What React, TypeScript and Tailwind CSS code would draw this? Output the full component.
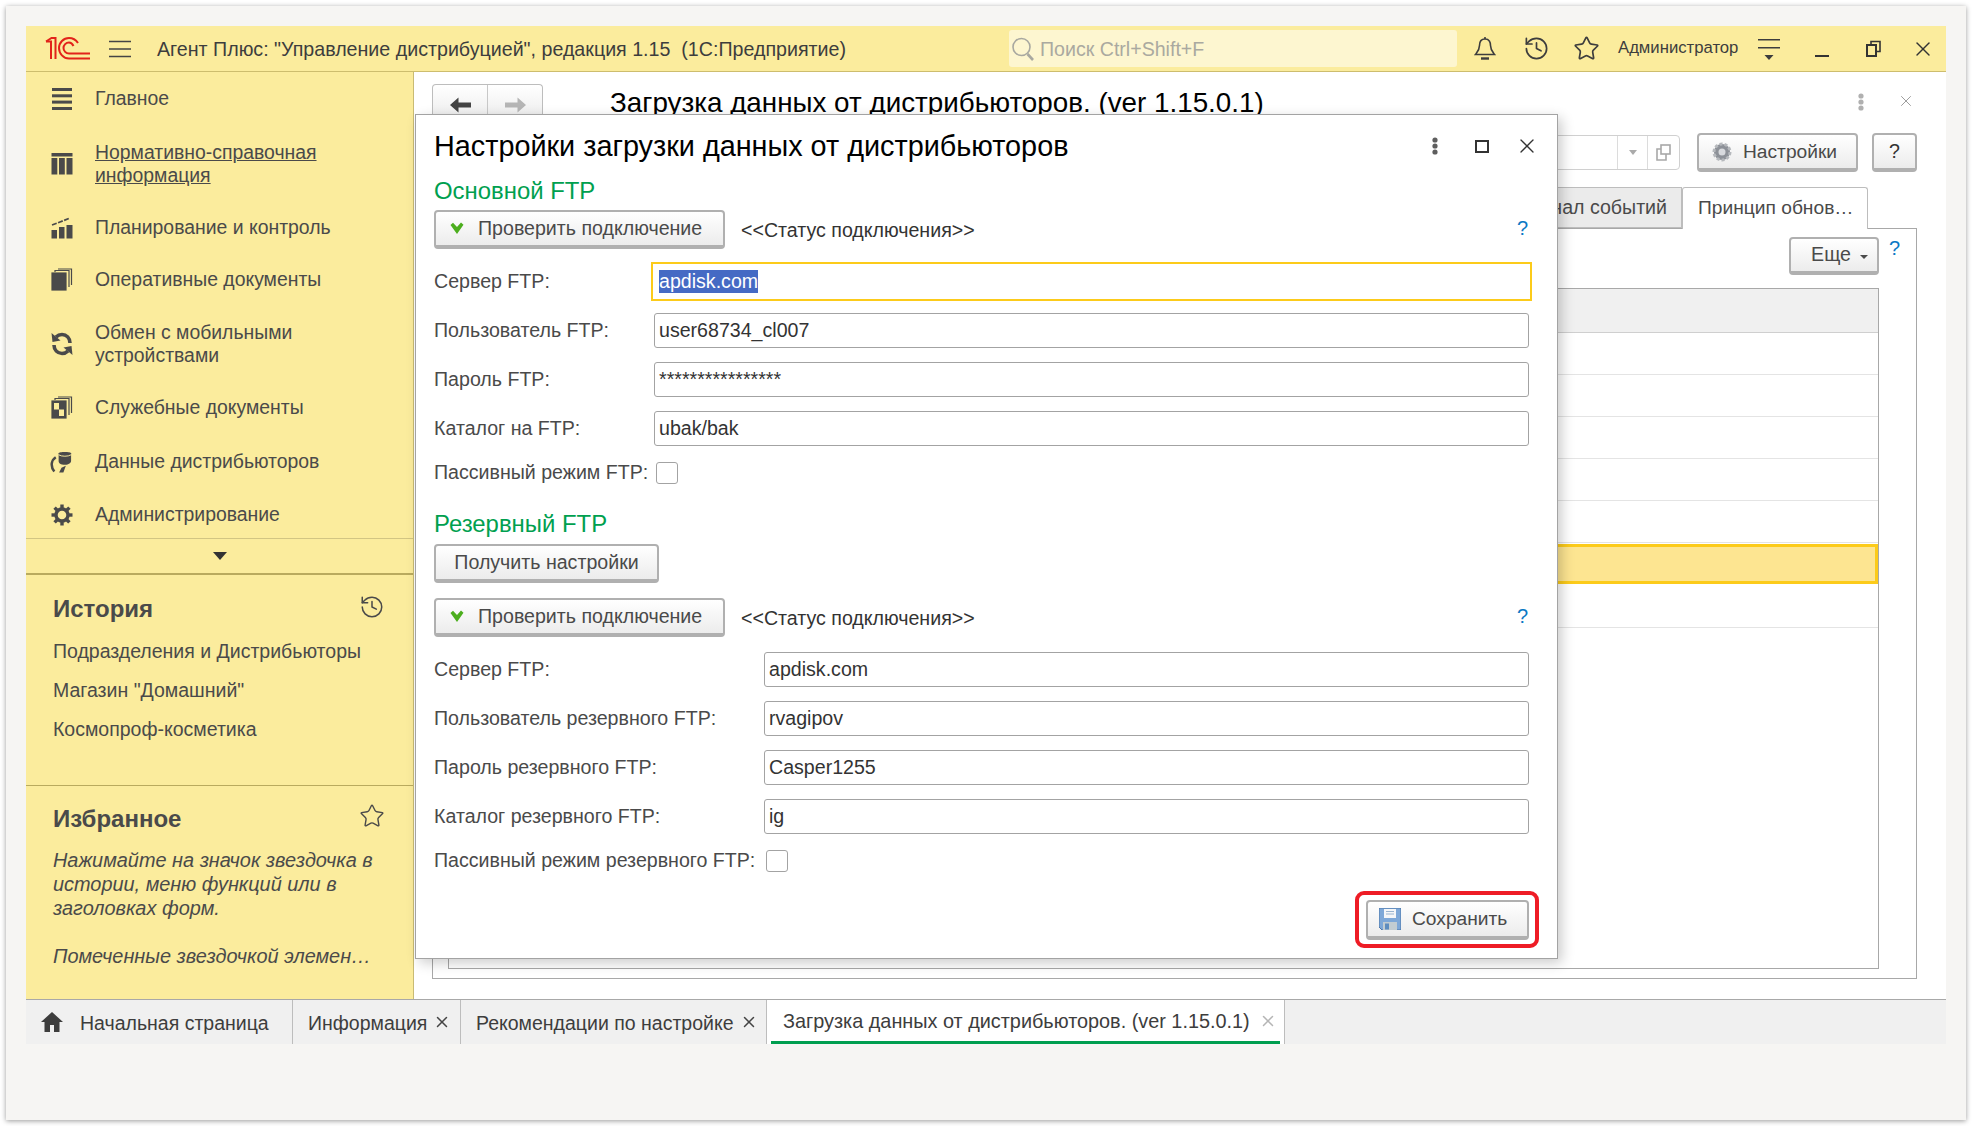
import React from "react";
import { History, Star, X } from "lucide-react";

// icons drawn to follow the 1C taxi interface
const Logo = () => (
  <svg width="45" height="23" viewBox="0 0 45 23" fill="none" stroke="#e2231a" strokeWidth="2">
    <path d="M1 4.5 H6 V22" />
    <path d="M1 4.5 L6.5 1 H10.5 V22" />
    <path d="M33 6 C31 3 27.5 1 24 1 C18.5 1 14 5.5 14 11 C14 16.5 18.5 21.5 24 21.5 H45" />
    <path d="M28.5 9 C27.5 7 26 5.5 24 5.5 C21 5.5 18.5 8 18.5 11 C18.5 14 21 16.5 24 16.5 H45" />
  </svg>
);

const Hamburger = () => (
  <svg width="22" height="18" viewBox="0 0 22 18" stroke="#444" strokeWidth="1.5">
    <path d="M0 1.5 H22 M0 9 H22 M0 16.5 H22" />
  </svg>
);

const Search = () => (
  <svg width="24" height="26" viewBox="0 0 24 26" fill="none" stroke="#a8a8a0" strokeWidth="1.6">
    <circle cx="10.5" cy="11" r="8.5" />
    <path d="M16.5 18 L22 24" strokeWidth="2.6" />
  </svg>
);

const Bell = () => (
  <svg width="22" height="25" viewBox="0 0 22 25" fill="none" stroke="#3d3d3d" strokeWidth="1.6">
    <path d="M11 3 C6.5 3 5.5 6.5 5.5 9.5 C5.5 14 3.5 16 1.5 18.5 H20.5 C18.5 16 16.5 14 16.5 9.5 C16.5 6.5 15.5 3 11 3 Z" />
    <path d="M11 1 V3" />
    <path d="M7 22.5 H15" strokeWidth="2.4" />
  </svg>
);

const FilterMenu = () => (
  <svg width="22" height="25" viewBox="0 0 22 25" fill="#3d3d3d">
    <rect x="0" y="3" width="22" height="1.5" />
    <rect x="0" y="11" width="22" height="1.5" />
    <path d="M6.5 19 H15.5 L11 24 Z" />
  </svg>
);

const Restore = () => (
  <svg width="15" height="17" viewBox="0 0 15 17" fill="none" stroke="#333" strokeWidth="2">
    <rect x="1" y="5" width="9" height="11" />
    <path d="M5 5 V1.5 H14 V11.5 H10" strokeWidth="1.6" />
  </svg>
);

const IconMain = () => (
  <svg width="22" height="22" viewBox="0 0 22 22" fill="#4a4a4a">
    <rect x="1" y="0" width="20" height="3" />
    <rect x="1" y="6.3" width="20" height="3" />
    <rect x="1" y="12.6" width="20" height="3" />
    <rect x="1" y="19" width="20" height="3" />
  </svg>
);

const IconTable = () => (
  <svg width="22" height="22" viewBox="0 0 22 22" fill="#4a4a4a">
    <rect x="0.5" y="0" width="21" height="3.5" />
    <rect x="0.5" y="5" width="5.8" height="16.5" />
    <rect x="8" y="5" width="5.8" height="16.5" />
    <rect x="15.5" y="5" width="6" height="16.5" />
  </svg>
);

const IconChart = () => (
  <svg width="22" height="22" viewBox="0 0 22 22" fill="#4a4a4a">
    <rect x="0.5" y="13" width="5.5" height="8.5" />
    <rect x="8" y="10" width="5.5" height="11.5" />
    <rect x="15.5" y="8" width="6" height="13.5" />
    <path d="M1 8 L9 5 L19 1" fill="none" stroke="#4a4a4a" strokeWidth="1.8" strokeDasharray="5 1.5" />
  </svg>
);

const IconDocs = () => (
  <svg width="22" height="23" viewBox="0 0 22 23" fill="none" stroke="#4a4a4a" strokeWidth="1.2">
    <rect x="1" y="5" width="14" height="17" fill="#4a4a4a" />
    <path d="M4 4 V2.5 H18 V19" />
    <path d="M7 1 H20.5 V17" />
  </svg>
);

const IconSync = () => (
  <svg width="22" height="24" viewBox="0 0 22 24" fill="none" stroke="#4a4a4a" strokeWidth="3.6">
    <path d="M19 11 C19 6 15.5 2.5 11 2.5 C8.5 2.5 6.5 3.5 5 5" />
    <path d="M0.5 1 L1.5 10 L9.5 8.5 Z" fill="#4a4a4a" stroke="none" />
    <path d="M3 13 C3 18 6.5 21.5 11 21.5 C13.5 21.5 15.5 20.5 17 19" />
    <path d="M21.5 23 L20.5 14 L12.5 15.5 Z" fill="#4a4a4a" stroke="none" />
  </svg>
);

const IconService = () => (
  <svg width="22" height="23" viewBox="0 0 22 23" fill="none" stroke="#4a4a4a" strokeWidth="1.2">
    <rect x="1" y="5" width="14" height="17" fill="#4a4a4a" />
    <rect x="3" y="7" width="5" height="6.5" fill="#fbec9d" stroke="none" />
    <rect x="8" y="13.5" width="5" height="6.5" fill="#fbec9d" stroke="none" />
    <path d="M4 4 V2.5 H18 V19" />
    <path d="M7 1 H20.5 V17" />
  </svg>
);

const IconData = () => (
  <svg width="24" height="23" viewBox="0 0 24 23" fill="#4a4a4a">
    <path d="M9 3 C9 1 22 1 22 3 V11 C22 14 17 15 15.5 15 C11 15 9 13.5 9 11 Z" />
    <path d="M9 4.5 C12 6.5 19 6.5 22 4.5" stroke="#fbec9d" strokeWidth="1" fill="none" />
    <path d="M6 7 C1.5 10 0 16 4.5 22" fill="none" stroke="#4a4a4a" strokeWidth="2.6" />
    <path d="M16.5 16 L14 23 H9.5 L12 18 Z" />
  </svg>
);

const IconGear = () => (
  <svg width="22" height="22" viewBox="0 0 22 22" fill="none" stroke="#4a4a4a">
    <circle cx="11" cy="11" r="6" strokeWidth="3.4" />
    <g strokeWidth="3.4">
      <path d="M11 0.5 V4" />
      <path d="M11 18 V21.5" />
      <path d="M0.5 11 H4" />
      <path d="M18 11 H21.5" />
      <path d="M3.6 3.6 L6 6" />
      <path d="M16 16 L18.4 18.4" />
      <path d="M3.6 18.4 L6 16" />
      <path d="M16 6 L18.4 3.6" />
    </g>
  </svg>
);

const Kebab = ({ color }: { color: string }) => (
  <svg width="6" height="18" viewBox="0 0 6 18" fill={color}>
    <circle cx="3" cy="3" r="2.6" />
    <circle cx="3" cy="9" r="2.6" />
    <circle cx="3" cy="15" r="2.6" />
  </svg>
);

const Check = () => (
  <svg width="14" height="13" viewBox="0 0 14 13" fill="#4cae1e">
    <path d="M0.5 3 L3 0.8 L7 5 L11 0.5 L13.5 2.8 L7 12 Z" />
  </svg>
);

const Floppy = () => (
  <svg width="22" height="22" viewBox="0 0 22 22">
    <path d="M0 0 H22 V22 H3 L0 19 Z" fill="#7ea8d8" stroke="#4d76a8" strokeWidth="1" />
    <rect x="5" y="1" width="12" height="9" fill="#f4f6f8" />
    <path d="M7 3.5 H15 M7 6 H15" stroke="#9ab4d0" strokeWidth="1" />
    <rect x="4" y="14" width="14" height="8" fill="#c3cdd2" />
    <rect x="6" y="15.5" width="4" height="6" fill="#5e8dbf" />
  </svg>
);

const Gear3d = () => (
  <svg width="20" height="22" viewBox="0 0 20 22">
    <circle cx="10" cy="11" r="8" fill="#8d9198" stroke="#b6b9bd" strokeWidth="3" strokeDasharray="3 2" />
    <circle cx="10" cy="11" r="3.5" fill="#d8dade" />
  </svg>
);

const Home = () => (
  <svg width="22" height="20" viewBox="0 0 22 20" fill="#3d3d3d">
    <path d="M11 0 L22 10 H18.5 V20 H13 V13 H9 V20 H3.5 V10 H0 Z" />
  </svg>
);

const ArrowLeft = ({ color }: { color: string }) => (
  <svg width="21" height="16" viewBox="0 0 21 16" fill={color}>
    <path d="M0 8 L8.5 0.5 V5.5 H21 V10.5 H8.5 V15.5 Z" />
  </svg>
);

const ArrowRight = ({ color }: { color: string }) => (
  <svg width="21" height="16" viewBox="0 0 21 16" fill={color}>
    <path d="M21 8 L12.5 0.5 V5.5 H0 V10.5 H12.5 V15.5 Z" />
  </svg>
);

const sections = [
  { icon: <IconMain />, title: ["Главное"], margin: "" },
  { icon: <IconTable />, title: ["Нормативно-справочная", "информация"], margin: "mt-[31px]", underline: true },
  { icon: <IconChart />, title: ["Планирование и контроль"], margin: "mt-[29px]" },
  { icon: <IconDocs />, title: ["Оперативные документы"], margin: "mt-[29px]" },
  { icon: <IconSync />, title: ["Обмен с мобильными", "устройствами"], margin: "mt-[30px]" },
  { icon: <IconService />, title: ["Служебные документы"], margin: "mt-[29px]" },
  { icon: <IconData />, title: ["Данные дистрибьюторов"], margin: "mt-[31px]" },
  { icon: <IconGear />, title: ["Администрирование"], margin: "mt-[30px]" },
];

const Sidebar = () => (
  <aside className="flex w-[388px] shrink-0 flex-col border-r border-[#c9bb74] bg-[#fbec9d] text-[19.4px] leading-[23px] text-[#4a4a4a]">
    <nav className="flex h-[466px] flex-col pl-[24px] pt-[15px]">
      {sections.map((s) => (
        <div key={s.title[0]} className={`flex items-center gap-[22px] ${s.margin}`}>
          <span className="flex w-[23px] shrink-0 justify-center">{s.icon}</span>
          <div className={s.underline ? "underline" : ""}>
            {s.title.map((line) => (
              <div key={line}>{line}</div>
            ))}
          </div>
        </div>
      ))}
    </nav>
    <div className="flex h-[37px] items-center justify-center border-t border-[#d2c583] pl-[1px] border-b-2 border-b-[#b9aa5e]">
      <div className="h-0 w-0 border-x-[7px] border-t-[8px] border-x-transparent border-t-[#333]" />
    </div>
    <section className="h-[211px] border-b border-[#b9aa5e] pl-[27px] pr-[28px] pt-[19px]">
      <div className="flex h-[28px] items-center justify-between">
        <h2 className="text-[24px] font-bold text-[#4a4a4a]">История</h2>
        <History size={26} strokeWidth={1.4} color="#4a4a4a" className="-mt-[2px]" />
      </div>
      <div className="mt-[18px] flex flex-col gap-[16px] text-[19.5px]">
        <div>Подразделения и Дистрибьюторы</div>
        <div>Магазин "Домашний"</div>
        <div>Космопроф-косметика</div>
      </div>
    </section>
    <section className="pl-[27px] pr-[28px] pt-[18px]">
      <div className="flex h-[28px] items-center justify-between">
        <h2 className="text-[24px] font-bold text-[#4a4a4a]">Избранное</h2>
        <Star size={26} strokeWidth={1.3} color="#4a4a4a" className="-mt-[4px]" />
      </div>
      <div className="mt-[16px] text-[19.9px] leading-[24px] italic">
        <p>Нажимайте на значок звездочка в</p>
        <p>истории, меню функций или в</p>
        <p>заголовках форм.</p>
        <p className="mt-[24px] whitespace-nowrap">Помеченные звездочкой элемен…</p>
      </div>
    </section>
  </aside>
);

const Button = ({ children, className = "" }: { children: React.ReactNode; className?: string }) => (
  <button className={`flex shrink-0 items-center rounded-[4px] border-2 border-b-[4px] border-[#b0b0b0] bg-linear-to-b from-white to-[#ececec] text-[#4a4a4a] ${className}`}>
    {children}
  </button>
);

const Heading = ({ children, className }: { children: React.ReactNode; className: string }) => (
  <div className={`h-[28px] text-[23.9px] leading-[28px] text-[#00a04f] ${className}`}>{children}</div>
);

const Help = () => <span className="text-[20px] text-[#0b78c4]">?</span>;

const CheckRow = ({ className }: { className: string }) => (
  <div className={`flex items-center ${className}`}>
    <Button className="h-[39px] w-[291px] pl-[14px]">
      <Check />
      <span className="ml-[14px]">Проверить подключение</span>
    </Button>
    <span className="ml-[16px] mt-[3px] flex-1 text-[#333]">{"<<Статус подключения>>"}</span>
    <span className="mr-[1px] -mt-[2px]"><Help /></span>
  </div>
);

const Field = ({ label, value, labelWidth, className }: { label: string; value: string; labelWidth: string; className: string }) => (
  <div className={`flex h-[35px] items-center ${className}`}>
    <label className={`shrink-0 text-[#4a4a4a] ${labelWidth}`}>{label}</label>
    <div className="flex h-[35px] flex-1 items-center rounded-[3px] border border-[#a3a3a3] pl-[4px] text-[#333]">{value}</div>
  </div>
);

const Checkbox = () => <span className="h-[22px] w-[22px] shrink-0 rounded-[3px] border border-[#a3a3a3]" />;

const Modal = () => (
  <div className="absolute left-[1px] top-[42px] flex h-[845px] w-[1143px] flex-col border border-[#a3a3a3] bg-white pl-[18px] pr-[28px] pt-[13px] text-[19.6px] shadow-[4px_4px_12px_rgba(0,0,0,0.2)]">
    <div className="flex h-[36px] items-center">
      <h1 className="flex-1 whitespace-nowrap text-[28.8px] leading-[36px] text-black">Настройки загрузки данных от дистрибьюторов</h1>
      <span className="mr-[37px] flex items-center"><Kebab color="#5e5e5e" /></span>
      <span className="mr-[26px] h-[13px] w-[14px] border-2 border-[#333]" />
      <X size={24} strokeWidth={1.3} color="#333" className="-mr-[10px]" />
    </div>
    <Heading className="mt-[13px]">Основной FTP</Heading>
    <CheckRow className="mt-[5px]" />
    <div className="mt-[13px] flex h-[39px] items-center">
      <label className="w-[217px] shrink-0 text-[#4a4a4a]">Сервер FTP:</label>
      <div className="-mr-[3px] flex h-[39px] flex-1 items-center border-2 border-[#fccb1a] pl-[6px]">
        <span className="bg-[#456ac4] leading-[23px] text-white">apdisk.com</span>
      </div>
    </div>
    <Field className="mt-[12px]" labelWidth="w-[220px]" label="Пользователь FTP:" value="user68734_cl007" />
    <Field className="mt-[14px]" labelWidth="w-[220px]" label="Пароль FTP:" value="****************" />
    <Field className="mt-[14px]" labelWidth="w-[220px]" label="Каталог на FTP:" value="ubak/bak" />
    <div className="mt-[16px] flex h-[22px] items-center text-[#4a4a4a]">
      <label className="w-[222px] shrink-0">Пассивный режим FTP:</label>
      <Checkbox />
    </div>
    <Heading className="mt-[26px]">Резервный FTP</Heading>
    <Button className="mt-[6px] h-[39px] w-[225px] justify-center">Получить настройки</Button>
    <CheckRow className="mt-[15px]" />
    <Field className="mt-[15px]" labelWidth="w-[330px]" label="Сервер FTP:" value="apdisk.com" />
    <Field className="mt-[14px]" labelWidth="w-[330px]" label="Пользователь резервного FTP:" value="rvagipov" />
    <Field className="mt-[14px]" labelWidth="w-[330px]" label="Пароль резервного FTP:" value="Casper1255" />
    <Field className="mt-[14px]" labelWidth="w-[330px]" label="Каталог резервного FTP:" value="ig" />
    <div className="mt-[16px] flex h-[22px] items-center text-[#4a4a4a]">
      <label className="w-[332px] shrink-0">Пассивный режим резервного FTP:</label>
      <Checkbox />
    </div>
    <div className="-mr-[10px] mt-[19px] self-end rounded-[9px] border-[4px] border-[#ee1c25] pb-[4px] pl-[7px] pr-[6px] pt-[5px]">
      <Button className="h-[40px] w-[163px] pl-[11px]">
        <Floppy />
        <span className="ml-[11px] text-[19.2px]">Сохранить</span>
      </Button>
    </div>
  </div>
);

const rows = [0, 1, 2, 3, 4];

const Content = () => (
  <main className="relative flex min-w-0 flex-1 flex-col bg-white pb-[20px] pl-[18px] pr-[29px] pt-[12px] text-[19.6px]">
    <div className="flex h-[37px] items-start">
      <div className="flex h-[37px] w-[111px] overflow-hidden rounded-t-[4px] border border-b-0 border-[#bdbdbd] bg-linear-to-b from-white to-[#ececec]">
        <div className="flex w-[55px] items-center justify-center border-r border-[#c8c8c8] pt-[4px]"><ArrowLeft color="#444" /></div>
        <div className="flex flex-1 items-center justify-center pt-[4px]"><ArrowRight color="#b5b5b5" /></div>
      </div>
      <div className="ml-[67px] mt-[1px] flex-1 whitespace-nowrap text-[27.8px] leading-[36px] text-black">Загрузка данных от дистрибьюторов. (ver 1.15.0.1)</div>
      <span className="mr-[33px] mt-[9px]"><Kebab color="#b0b0b0" /></span>
      <X size={18} strokeWidth={1.3} color="#9a9a9a" className="mr-[2px] mt-[8px]" />
    </div>
    <div className="mt-[12px] flex h-[39px] items-center justify-end">
      <div className="flex h-[35px] w-[300px] justify-end rounded-[4px] border border-[#d0d0d0] text-[#a0a0a0]">
        <span className="flex w-[31px] items-center justify-center border-x border-[#dcdcdc]">
          <span className="h-0 w-0 border-x-[4px] border-t-[5px] border-x-transparent border-t-[#aaa]" />
        </span>
        <span className="flex w-[31px] items-center justify-center">
          <svg width="15" height="17" viewBox="0 0 15 17" fill="none" stroke="#a8a8a8" strokeWidth="1.6">
            <rect x="5" y="1" width="9" height="9" />
            <path d="M5 5 H1 V16 H10 V10" />
          </svg>
        </span>
      </div>
      <Button className="ml-[17px] h-[39px] w-[161px] pl-[13px]">
        <Gear3d />
        <span className="ml-[11px] mt-[1px] text-[19.2px]">Настройки</span>
      </Button>
      <Button className="ml-[14px] h-[39px] w-[45px] justify-center text-[#333]">?</Button>
    </div>
    <div className="mt-[15px] flex h-[41px] items-end justify-end pr-[49px]">
      <div className="flex h-[41px] w-[300px] items-center justify-end border border-[#bdbdbd] bg-[#ebebeb] pr-[14px] text-[#4a4a4a]">Журнал событий</div>
      <div className="relative z-10 -mb-[1px] flex h-[42px] w-[186px] items-center rounded-t-[3px] border border-b-0 border-[#bdbdbd] bg-white pl-[15px] text-[19.2px] text-[#4a4a4a]">Принцип обнов…</div>
    </div>
    <div className="flex flex-1 flex-col border border-[#a8a8a8] pb-[9px] pl-[15px] pr-[37px] pt-[8px]">
      <div className="-mr-[28px] flex h-[38px] justify-end">
        <Button className="h-[38px] w-[90px] justify-center gap-[9px] pl-[11px]">
          <span>Еще</span>
          <span className="mt-[3px] h-0 w-0 border-x-[4px] border-t-[4px] border-x-transparent border-t-[#4a4a4a]" />
        </Button>
        <span className="w-[28px] pl-[10px] -mt-[4px]"><Help /></span>
      </div>
      <div className="mt-[13px] flex flex-1 flex-col border border-[#a8a8a8]">
        <div className="h-[44px] border-b border-[#cfcfcf] bg-[#f0f0f0]" />
        {rows.map((r) => (
          <div key={r} className="h-[42px] border-b border-[#e4e4e4]" />
        ))}
        <div className="mt-[1px] h-[40px] border-[3px] border-[#fccb1a] bg-[#fde591]" />
        <div className="h-[44px] border-b border-[#e4e4e4]" />
      </div>
    </div>
    <Modal />
  </main>
);

const TabBar = () => (
  <div className="flex h-[45px] border-t border-[#a8a8a8] bg-[#f0f0f0] text-[19.5px] text-[#3d3d3d]">
    <div className="flex w-[267px] items-center border-r border-[#bdbdbd] pl-[15px]">
      <Home />
      <span className="ml-[17px] mt-[3px]">Начальная страница</span>
    </div>
    <div className="flex w-[168px] items-center justify-between border-r border-[#bdbdbd] pl-[15px] pr-[9px]">
      <span className="mt-[3px]">Информация</span>
      <X size={18} strokeWidth={2} color="#444" />
    </div>
    <div className="flex w-[306px] items-center justify-between border-r border-[#bdbdbd] pl-[15px] pr-[8px]">
      <span className="mt-[3px]">Рекомендации по настройке</span>
      <X size={18} strokeWidth={2} color="#444" />
    </div>
    <div className="relative flex w-[518px] items-center justify-between border-r border-[#bdbdbd] bg-white pb-[3px] pl-[16px] pr-[7px]">
      <span className="mt-[3px] text-[19.85px]">Загрузка данных от дистрибьюторов. (ver 1.15.0.1)</span>
      <X size={18} strokeWidth={2} color="#b5b5b5" />
      <span className="absolute bottom-0 left-[4px] right-[4px] h-[3px] bg-[#009e4f]" />
    </div>
  </div>
);

export default function App() {
  return (
    <div className="h-[1126px] w-[1972px] overflow-hidden bg-white pl-[6px] pt-[6px] font-['Liberation_Sans',Arial,sans-serif]">
      <div className="h-[1114px] w-[1960px] bg-[#f6f5f3] pl-[20px] pt-[20px] shadow-[0_1px_5px_rgba(0,0,0,0.4)]">
        <div className="flex h-[1018px] w-[1920px] flex-col">
          <header className="flex h-[46px] shrink-0 items-center border-b border-[#cdbd6e] bg-[#fbec9d] pl-[19px] text-[#3d3d3d]">
            <Logo />
            <span className="ml-[19px]"><Hamburger /></span>
            <span className="ml-[26px] mt-[2px] w-[852px] text-[19.65px]">Агент Плюс: "Управление дистрибуцией", редакция 1.15 &nbsp;(1С:Предприятие)</span>
            <div className="flex h-[37px] w-[448px] items-center rounded-[3px] bg-[#fdf6d0] pl-[2px] text-[19.6px] text-[#aaa9a0]">
              <Search />
              <span className="ml-[5px] mt-[2px]">Поиск Ctrl+Shift+F</span>
            </div>
            <span className="ml-[17px]"><Bell /></span>
            <History size={27} strokeWidth={1.5} color="#3d3d3d" className="ml-[27px]" />
            <Star size={27} strokeWidth={1.5} color="#3d3d3d" className="ml-[23px]" />
            <span className="ml-[18px] -mt-[2px] text-[16.7px]">Администратор</span>
            <span className="ml-[20px]"><FilterMenu /></span>
            <span className="ml-[35px] mt-[14px] h-[2px] w-[14px] bg-[#333]" />
            <span className="ml-[37px]"><Restore /></span>
            <X size={24} strokeWidth={1.4} color="#333" className="ml-[30px]" />
          </header>
          <div className="flex min-h-0 flex-1">
            <Sidebar />
            <Content />
          </div>
          <TabBar />
        </div>
      </div>
    </div>
  );
}
